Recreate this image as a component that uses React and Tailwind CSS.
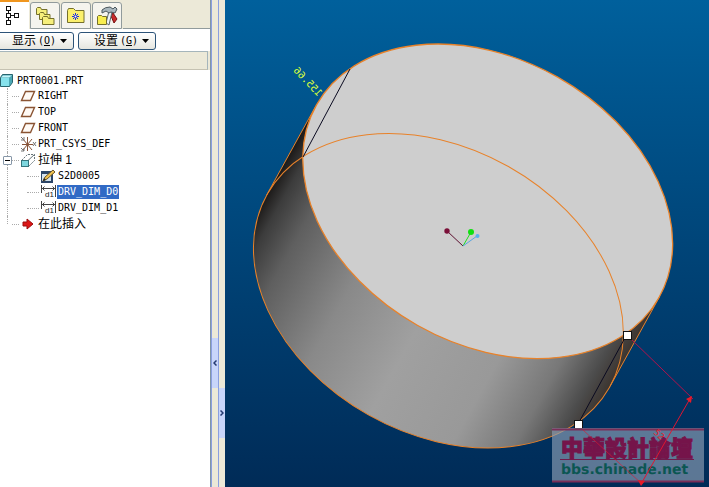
import clsx from 'clsx'

const LINE = '#e8822a'

function StructureIcon() {
  return (
    <svg width="18" height="20" viewBox="0 0 18 20" fill="#fff" stroke="#111" shapeRendering="crispEdges">
      <path d="M4.5 5v10M5 9.5h7" fill="none" />
      <rect x="2.5" y="0.5" width="4" height="4" />
      <rect x="2.5" y="7.5" width="4" height="4" />
      <rect x="10.5" y="7.5" width="4" height="4" />
      <rect x="2.5" y="14.5" width="4" height="4" />
    </svg>
  )
}

function FoldersIcon() {
  return (
    <svg width="20" height="20" viewBox="0 0 20 20" fill="#f6ef7c" stroke="#75702c">
      <path d="M1.5 8.500v-6l1-1h3l1 2h5.500v5z" />
      <path d="M4.500 13.500v-6l1-1h3l1 2h5.500v5z" />
      <path d="M7.500 18.500v-7l1-1h4l1 2h5.500v6z" />
    </svg>
  )
}

function FavoritesIcon() {
  return (
    <svg width="18" height="16" viewBox="0 0 18 16">
      <path d="M0.500 14.500v-12l1-2h5l2 2h8.500v12z" fill="#fbf06c" stroke="#75702c" />
      <path d="M8.500 5v7M5 8.500h7M6 6l5 5M11 6l-5 5" stroke="#2030d8" fill="none" />
      <circle cx="8.500" cy="8.500" r="1" fill="#fff" />
    </svg>
  )
}

function ToolsIcon() {
  return (
    <svg width="21" height="20" viewBox="0 0 21 20">
      <path d="M14 10l2-3 4 6-3 4z" fill="#c92b2b" stroke="#711" />
      <path d="M12 5l-3 12 3 2 3-13z" fill="#eef3f5" stroke="#59666c" />
      <path d="M0.500 18.500v-8l1-1h3l1 1h4v8z" fill="#f8ee50" stroke="#75702c" />
      <path d="M5 4q3-3 8-3l3 2 2-2 2 2-2 4-4-1-2 1-3-2-4 2z" fill="#a9b7be" stroke="#4b575d" />
    </svg>
  )
}

function PartIcon() {
  return (
    <svg width="13" height="13" viewBox="0 0 13 13">
      <path d="M0.500 3.500l2-3h10v8l-3 4h-9z" fill="#4aa7b4" stroke="#28646e" />
      <path d="M1 4h8v8H1z" fill="#86e2ec" />
      <path d="M1 3.500l2-2h9l-3 2z" fill="#c5f6fa" />
    </svg>
  )
}

function PlaneIcon() {
  return (
    <svg width="16" height="12" viewBox="0 0 16 12">
      <path d="M5.500 1.500h9l-4 9h-9z" fill="#fffaf5" stroke="#8a5433" strokeWidth="1.400" />
    </svg>
  )
}

function CsysIcon() {
  return (
    <svg width="17" height="16" viewBox="0 0 17 16" fill="none" stroke="#885338">
      <path d="M7.500 1v14M2 8.500h11M3 3l9 11M12 3L3 14" />
      <path d="M1 1l3 3M4 1v3H1M1 12l3 3M4 12v3H1M13 6l3 4M16 6l-3 4" stroke="#777" />
    </svg>
  )
}

function ExtrudeIcon() {
  return (
    <svg width="15" height="15" viewBox="0 0 15 15">
      <path d="M0.500 7.500l6-6h7v6l-6 6" fill="#fff" stroke="#66757a" strokeDasharray="2 1" />
      <path d="M7 7.500l6.500-6" stroke="#66757a" />
      <rect x="0.500" y="7.500" width="7" height="6" fill="#7ed7df" stroke="#35757d" />
    </svg>
  )
}

function SketchIcon() {
  return (
    <svg width="16" height="15" viewBox="0 0 16 15">
      <rect x="1" y="2" width="12" height="12" fill="#2c4668" />
      <path d="M2 5h9v7H2z" fill="#d5e3ed" />
      <path d="M3 12l2-4 8-7 2 2-8 7z" fill="#f0c34f" stroke="#695327" />
      <path d="M3 12l1-3 2 2z" fill="#222" />
    </svg>
  )
}

function DimensionIcon() {
  return (
    <svg width="17" height="16" viewBox="0 0 17 16">
      <path d="M1.500 1v8M15.500 1v12M2 4.500h13M4.500 2.500l-2 2 2 2M12.500 2.500l2 2-2 2" fill="none" stroke="#444" />
      <text x="5" y="13" fontSize="8" fontFamily="Liberation Sans, sans-serif" fill="#222">d1</text>
    </svg>
  )
}

function InsertIcon() {
  return (
    <svg width="12" height="12" viewBox="0 0 12 12">
      <path d="M1 4h4V1l6 5-6 5V8H1z" fill="#dc1616" stroke="#9c0c0c" />
    </svg>
  )
}

const tabs = [
  { label: 'Model Tree', icon: StructureIcon },
  { label: 'Folder Browser', icon: FoldersIcon },
  { label: 'Favorites', icon: FavoritesIcon },
  { label: 'Tools', icon: ToolsIcon },
]

const nodes = [
  { label: 'RIGHT', icon: PlaneIcon, level: 1 },
  { label: 'TOP', icon: PlaneIcon, level: 1 },
  { label: 'FRONT', icon: PlaneIcon, level: 1 },
  { label: 'PRT_CSYS_DEF', icon: CsysIcon, level: 1 },
  { label: '拉伸 1', icon: ExtrudeIcon, level: 1, cjk: true, expanded: true },
  { label: 'S2D0005', icon: SketchIcon, level: 2 },
  { label: 'DRV_DIM_D0', icon: DimensionIcon, level: 2, selected: true },
  { label: 'DRV_DIM_D1', icon: DimensionIcon, level: 2 },
  { label: '在此插入', icon: InsertIcon, level: 1, cjk: true, last: true },
]

function MenuButton({ label, hotkey }) {
  return (
    <button className="flex h-[18px] w-[78px] items-center justify-end gap-1 rounded-[3px] border border-[#2c5378] bg-gradient-to-b from-white to-[#e6e6df] pr-1.5 text-[12px] leading-4">
      <span className="flex items-center gap-0.5 whitespace-nowrap">
        {label}
        <span className="font-['DejaVu_Sans_Mono',monospace] text-[10px]">(<u>{hotkey}</u>)</span>
      </span>
      <svg width="7" height="4" viewBox="0 0 7 4"><path d="M0 0h7L3.500 4z" /></svg>
    </button>
  )
}

function TreeNode({ node }) {
  const Icon = node.icon
  return (
    <li className="flex h-4 items-center">
      <span className={clsx('flex w-2 shrink-0 border-r border-dotted border-[#aaa]', node.last ? 'h-2 self-start' : 'h-4')} />
      {node.expanded ? (
        <button aria-label="Collapse" className="-ml-[5px] flex size-[9px] shrink-0 items-center justify-center rounded-[1px] border border-[#8797a8] bg-white">
          <span className="h-px w-[5px] bg-black" />
        </button>
      ) : (
        <span className="w-1 shrink-0" />
      )}
      <span className={clsx('h-px shrink-0 border-t border-dotted border-[#aaa]', node.level === 2 ? 'ml-[15px] w-3' : 'w-[7px]')} />
      <span className="flex w-[18px] shrink-0 justify-center"><Icon /></span>
      <span
        className={clsx(
          'whitespace-nowrap px-px leading-[14px]',
          node.cjk ? 'text-[12px]' : "font-['DejaVu_Sans_Mono',monospace] text-[10px]",
          node.selected && 'bg-[#316ac5] text-white',
        )}
      >
        {node.label}
      </span>
    </li>
  )
}

function ModelTree() {
  return (
    <aside className="flex w-[211px] shrink-0 flex-col border-r border-[#8296a5] bg-[#ece9d8]">
      <nav className="flex h-[29px] items-end gap-px">
        {tabs.map(({ label, icon: Icon }, i) => (
          <button
            key={label}
            aria-label={label}
            className={clsx(
              'flex items-center justify-center',
              i === 0
                ? 'h-[29px] w-[29px] border-t-2 border-[#f0961e] bg-white pr-1'
                : 'h-[27px] w-[30px] rounded-t-[3px] border border-[#919b9c] bg-[#f5f4ee]',
            )}
          >
            <Icon />
          </button>
        ))}
        <div className="h-px flex-1 bg-[#919b9c]" />
      </nav>
      <div className="flex h-[22px] items-center gap-1 bg-white pt-0.5">
        <div className="-ml-1"><MenuButton label="显示" hotkey="O" /></div>
        <MenuButton label="设置" hotkey="G" />
      </div>
      <div className="mr-0.5 h-[19px] border-y border-r border-[#a5b5bb] border-b-[#c5c2b2]" />
      <div className="flex-1 bg-white pt-0.5">
        <div className="flex h-4 items-center gap-1">
          <PartIcon />
          <span className="font-['DejaVu_Sans_Mono',monospace] text-[10px]">PRT0001.PRT</span>
        </div>
        <ul>
          {nodes.map((node) => <TreeNode key={node.label} node={node} />)}
        </ul>
      </div>
    </aside>
  )
}

function Splitter() {
  return (
    <div className="flex w-[14px] shrink-0 bg-[#ece9d8]">
      <div className="flex w-[8px] flex-col border-x border-[#8b9fe0]">
        <div className="flex-1" />
        <button aria-label="Collapse panel" className="flex h-[50px] items-center justify-center bg-[#c8d5fa]">
          <svg width="4" height="6" viewBox="0 0 4 6" fill="none" stroke="#253a70" strokeWidth="1.500"><path d="M3.500 0.500L1 3l2.500 2.500" /></svg>
        </button>
        <div className="h-[99px]" />
      </div>
      <div className="flex w-[6px] flex-col">
        <div className="flex-1" />
        <button aria-label="Expand panel" className="flex h-[50px] items-center justify-center bg-[#c8d5fa]">
          <svg width="4" height="6" viewBox="0 0 4 6" fill="none" stroke="#253a70" strokeWidth="1.500"><path d="M0.500 0.500L3 3 0.500 5.500" /></svg>
        </button>
        <div className="h-[49px]" />
      </div>
    </div>
  )
}

function Viewport() {
  return (
    <main className="min-w-0 flex-1 bg-gradient-to-b from-[#00609c] to-[#002b57]">
      <svg className="h-full w-full" viewBox="225 0 484 487" fill="none">
        <defs>
          <linearGradient id="side" gradientUnits="userSpaceOnUse" x1="267" y1="195" x2="610" y2="386">
            <stop offset="0" stopColor="#1c1a19" />
            <stop offset="0.040" stopColor="#3c3c3c" />
            <stop offset="0.120" stopColor="#5f5f5f" />
            <stop offset="0.300" stopColor="#898989" />
            <stop offset="0.500" stopColor="#a0a0a0" />
            <stop offset="0.720" stopColor="#999" />
            <stop offset="0.860" stopColor="#787878" />
            <stop offset="0.950" stopColor="#4c4c4c" />
            <stop offset="1" stopColor="#3c3530" />
          </linearGradient>
        </defs>

        {/* Cylinder side */}
        <path d="M316 105.600L266.700 195A196.500 142.600 29.400 0 0 610.100 386.300L659.400 297z" fill="url(#side)" />
        <ellipse cx="487.700" cy="201.300" rx="196.500" ry="142.600" transform="rotate(29.400 487.700 201.300)" fill="#cecece" />

        {/* Edges */}
        <g stroke={LINE}>
          <ellipse cx="487.700" cy="201.300" rx="196.500" ry="142.600" transform="rotate(29.400 487.700 201.300)" strokeWidth="1.300" />
          <ellipse cx="438.400" cy="290.700" rx="196.500" ry="142.600" transform="rotate(29.400 438.400 290.700)" />
          <path d="M316 105.600L266.700 195M659.400 297L610.100 386.300" />
        </g>
        <path d="M350 69L303 157M626 336L578 424" stroke="#0a0a20" />

        {/* Spin center */}
        <path d="M447 231l16 15" stroke="#5c1030" />
        <path d="M463 246l8-14" stroke="#1fe01f" />
        <path d="M463 246l14-10" stroke="#5aa5e0" />
        <circle cx="447" cy="231" r="2.700" fill="#7a0f38" />
        <circle cx="471" cy="232" r="3" fill="#10e010" />
        <circle cx="477.500" cy="236" r="2" fill="#5ab0ee" />

        {/* Handles */}
        <g fill="#fff" stroke="#111">
          <rect x="623.500" y="331.500" width="8" height="8" />
          <rect x="574.500" y="420.500" width="8" height="8" />
        </g>

        {/* Forum stamp */}
        <rect x="552" y="428" width="152" height="54" fill="#8ea0b5" fillOpacity="0.650" />
        <path d="M552 429.500h152M552 481.500h152" stroke="#7a2e58" strokeWidth="2" />
        <path d="M560 459.500h134" stroke="#6e1c4c" />
        <text x="561" y="456" fontSize="22" fontWeight="900" fontFamily="Noto Sans CJK TC, sans-serif" fill="#75144a" stroke="#75144a">中華設計論壇</text>
        <text x="561" y="474" fontSize="14" fontWeight="bold" fontFamily="DejaVu Sans, sans-serif" fill="#0b5652" textRendering="geometricPrecision">bbs.chinade.net</text>

        {/* Dimensions */}
        <text transform="translate(318 97) rotate(46) scale(-1 1)" fontSize="10" fontFamily="DejaVu Sans Mono, monospace" fill="#dcff3c">155.66</text>
        <path d="M632 340L693 399" stroke="#b0124c" />
        <path d="M583 430l59 54" stroke="#e01530" strokeOpacity="0.600" />
        <path d="M691 397L641 484" stroke="#e01530" />
        <path d="M692 396l-6 3 5 4zM638 480l7 1-4 5z" fill="#e81a28" />
        <text transform="translate(653 433) rotate(44)" fontSize="9" fontFamily="DejaVu Sans Mono, monospace" fill="#e81a28">52</text>
      </svg>
    </main>
  )
}

export default function App() {
  return (
    <div className="flex h-screen overflow-hidden font-['Liberation_Sans','Noto_Sans_CJK_SC',sans-serif] text-black">
      <ModelTree />
      <Splitter />
      <Viewport />
    </div>
  )
}
